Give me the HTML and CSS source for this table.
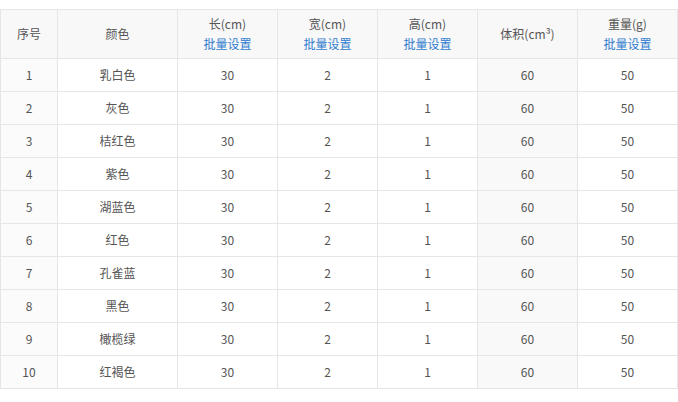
FILE: index.html
```html
<!DOCTYPE html>
<html lang="zh-CN">
<head>
<meta charset="utf-8">
<link rel="stylesheet" href="styles.css">
</head>
<body>
<table class="spec">
  <colgroup>
    <col class="c-no"><col class="c-color"><col class="c-n"><col class="c-n"><col class="c-n"><col class="c-n"><col class="c-n">
  </colgroup>
  <thead>
    <tr>
      <th>序号</th>
      <th>颜色</th>
      <th><div>长(cm)</div><a class="batch">批量设置</a></th>
      <th><div>宽(cm)</div><a class="batch">批量设置</a></th>
      <th><div>高(cm)</div><a class="batch">批量设置</a></th>
      <th class="vol">体积(cm³)</th>
      <th><div>重量(g)</div><a class="batch">批量设置</a></th>
    </tr>
  </thead>
  <tbody>
    <tr><td class="no">1</td><td>乳白色</td><td>30</td><td>2</td><td>1</td><td class="vol">60</td><td>50</td></tr>
    <tr><td class="no">2</td><td>灰色</td><td>30</td><td>2</td><td>1</td><td class="vol">60</td><td>50</td></tr>
    <tr><td class="no">3</td><td>桔红色</td><td>30</td><td>2</td><td>1</td><td class="vol">60</td><td>50</td></tr>
    <tr><td class="no">4</td><td>紫色</td><td>30</td><td>2</td><td>1</td><td class="vol">60</td><td>50</td></tr>
    <tr><td class="no">5</td><td>湖蓝色</td><td>30</td><td>2</td><td>1</td><td class="vol">60</td><td>50</td></tr>
    <tr><td class="no">6</td><td>红色</td><td>30</td><td>2</td><td>1</td><td class="vol">60</td><td>50</td></tr>
    <tr><td class="no">7</td><td>孔雀蓝</td><td>30</td><td>2</td><td>1</td><td class="vol">60</td><td>50</td></tr>
    <tr><td class="no">8</td><td>黑色</td><td>30</td><td>2</td><td>1</td><td class="vol">60</td><td>50</td></tr>
    <tr><td class="no">9</td><td>橄榄绿</td><td>30</td><td>2</td><td>1</td><td class="vol">60</td><td>50</td></tr>
    <tr><td class="no">10</td><td>红褐色</td><td>30</td><td>2</td><td>1</td><td class="vol">60</td><td>50</td></tr>
  </tbody>
</table>
</body>
</html>
```
FILE: styles.css
```css
html, body {
  margin: 0;
  padding: 0;
  background: #fff;
}
body {
  padding-top: 9px;
  font-family: "Noto Sans CJK SC", "Noto Sans", sans-serif;
  font-size: 12px;
  color: #555;
}
.spec {
  border-collapse: collapse;
  table-layout: fixed;
  width: 678px;
}
.c-no { width: 57px; }
.c-color { width: 120px; }
.c-n { width: 100px; }
.spec th,
.spec td {
  border: 1px solid #e6e6e6;
  text-align: center;
  padding: 0;
  font-weight: normal;
  line-height: 20px;
}
.spec th {
  height: 48px;
  background: #f8f8f8;
  color: #555;
}
.spec td {
  height: 32px;
  color: #555;
}
.spec td.no {
  background: #fbfbfb;
}
.spec td.vol {
  background: #f9f9f9;
}
.batch {
  display: block;
  color: #2f7ccf;
  cursor: pointer;
}
```
